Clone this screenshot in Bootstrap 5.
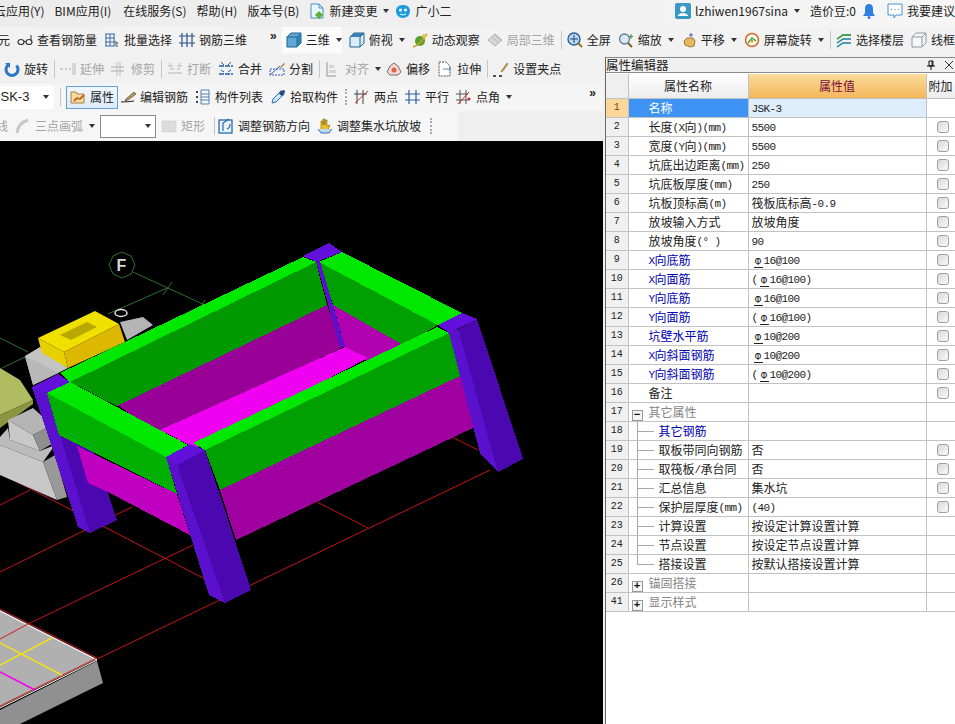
<!DOCTYPE html>
<html lang="en">
<head>
  <meta charset="UTF-8">
  <meta name="viewport" content="width=device-width, initial-scale=1.0">
  <title>钢筋三维 属性编辑器</title>
  <link href="https://cdn.jsdelivr.net/npm/bootstrap@5.3.0/dist/css/bootstrap.min.css" rel="stylesheet">
  <style>
    html, body { height: 100%; overflow: hidden; }
    body { background: #f0f0f0; color: #222; font: 12px/16px "Noto Sans CJK SC", "Liberation Sans", sans-serif; }
    .app-shell { width: 955px; height: 724px; }
    .tb-row { white-space: nowrap; overflow: hidden; flex: none; }
    .row-menu { height: 27px; padding-bottom: 5px; background: linear-gradient(90deg, #ececec 0, #f0f0f0 50%, #f6f6f6 100%); gap: 10px; }
    .row-main { height: 28px; padding-bottom: 2px; background: #f2f2f2; gap: 7px; }
    .row-edit { height: 28px; background: #f1f1f1; gap: 7px; width: 603px; }
    .row-prop { height: 28px; background: #f5f5f5; gap: 7px; width: 603px; }
    .row-draw { height: 30px; background: linear-gradient(90deg, #f6f6f6 0, #f6f6f6 458px, #efefef 458px); gap: 5px; width: 603px; }
    .tb-item { display: inline-flex; align-items: center; flex: none; }
    .tb-ico { width: 16px; height: 16px; margin-right: 4px; flex: none; }
    .tb-off { color: #a4a4a4; }
    .tb-sep { width: 1px; height: 18px; background: #c6c6c6; flex: none; margin: 0 -2px 0 -1px; }
    .tb-caret { width: 0; height: 0; margin-left: 6px; border: 3px solid transparent; border-top: 4px solid #333; border-bottom: 0; flex: none; }
    .tb-more { font: 12px/12px "Liberation Sans", sans-serif; font-weight: 700; letter-spacing: -1px; flex: none; }
    .tb-grip { width: 2px; height: 16px; border-left: 2px dotted #aaa; flex: none; }
    .clip-menu { margin-left: -6px; }
    .bim-menu { margin-right: 2px; }
    .change-menu { margin-right: -4px; }
    .bean-menu { margin-right: -5px; }
    .bell-ico { margin-right: 0; }
    .clip-main { margin-left: -2px; }
    .clip-draw { margin-left: -4px; margin-right: 2px; }
    .align-item { margin-right: -2px; }
    .pit-item { margin-left: 2px; }
    .view-group { background: #fbfbfb; height: 26px; margin-left: -1px; padding-left: 4px; }
    .combo-clip { width: 60px; height: 23px; background: #fff; padding-right: 5px; margin-left: -6px; justify-content: space-between; flex: none; font-family: "Liberation Sans", sans-serif; font-size: 13px; }
    .combo-box { width: 56px; height: 23px; background: #fff; border: 1px solid #8a8a8a; padding-right: 4px; justify-content: flex-end; flex: none; }
    .btn-active { height: 23px; padding: 0 3px; margin-right: -5px; border: 1px solid #62a0d8; background: linear-gradient(#f3f8fd, #dcebf9); flex: none; }
    .scene-3d { width: 603px; height: 583px; background: #000; display: block; }
    .pit-solid { shape-rendering: crispEdges; }
    .side-gap { width: 2px; background: #f0f0f0; flex: none; }
    .prop-panel { width: 350px; margin-top: 2px; background: #fff; border-left: 1px solid #666; flex: none; }
    .prop-title { height: 16px; background: #f0f0f0; border-top: 1px solid #8a8a8a; border-bottom: 1px solid #8a8a8a; font-size: 12.500px; line-height: 14px; margin-bottom: 1px; padding-right: 1px; }
    .prop-title svg { width: 10px; height: 10px; }
    .prop-grid { width: 349px; table-layout: fixed; border-collapse: collapse; margin: 0; font-size: 12px; }
    .prop-grid th, .prop-grid td { height: 19px; padding: 0; border: solid #c2c2c2; border-width: 0 1px 1px 0; line-height: 17px; overflow: hidden; white-space: nowrap; color: #222; background: #fff; font-weight: 400; box-shadow: none; vertical-align: middle; }
    .prop-grid thead th { height: 24px; font-size: 12px; text-align: center; background: linear-gradient(#fff, #ececec); border-bottom-color: #c2c2c2; }
    .prop-grid thead th.head-val { background: linear-gradient(#fbdc9a, #f3b65a); color: #7a0b3c; }
    .prop-grid thead th.head-num { background: #efefef; }
    .prop-grid .cell-num { background: #f0f0f0; text-align: center; font: 10px/17px "Liberation Mono", monospace; }
    .prop-grid .cell-name { padding-left: 20px; }
    .prop-grid .cell-val { padding-left: 3px; }
    .prop-grid .cell-chk { text-align: center; padding-left: 5px; line-height: 0; }
    .prop-grid .name-blue { color: #0000b4; }
    .prop-grid .name-grey { color: #858585; }
    .prop-grid tr.row-sel .cell-num { background: #fbd79c; color: #7a3a10; }
    .prop-grid tr.row-sel .cell-name { background: #3f93f4; color: #fff; }
    .prop-grid tr.row-sel .cell-val { background: #deedfb; }
    .prop-grid .tree-mid { padding-left: 30px; background: linear-gradient(#a8a8a8, #a8a8a8) 8px 0/1px 100% no-repeat, linear-gradient(#a8a8a8, #a8a8a8) 8px 9px/17px 1px no-repeat, #fff; }
    .prop-grid .tree-end { padding-left: 30px; background: linear-gradient(#a8a8a8, #a8a8a8) 8px 0/1px 10px no-repeat, linear-gradient(#a8a8a8, #a8a8a8) 8px 9px/17px 1px no-repeat, #fff; }
    .prop-grid .tree-head { padding-left: 3px; }
    .tree-box { display: inline-block; width: 11px; height: 11px; margin-right: 6px; border: 1px solid #999; background: #f4f4f4; font: 700 11px/8px "Liberation Mono", monospace; color: #111; text-align: center; vertical-align: -1px; }
    .lat { font: 11px/12px "Liberation Mono", monospace; letter-spacing: -.6px; vertical-align: 1px; }
    .rebar { display: inline-block; width: 9px; margin: 0 1px 0 2px; font: 10px/9px "Liberation Mono", monospace; border-bottom: 1px solid #222; text-align: center; }
    .prop-check { width: 12px; height: 12px; margin: 0; border: 1px solid #a0a0a0; border-radius: 0; background: linear-gradient(135deg, #d8d8d8, #fafafa); vertical-align: middle; }
    .f-label { font: 700 16px "Liberation Sans", sans-serif; fill: #d8d8d8; }
  </style>
</head>
<body>
  <svg width="0" height="0" class="d-none">
    <symbol id="i-doc" viewBox="0 0 16 16"><path d="M2 1h8l4 4v10H2z" fill="#eaf4fb" stroke="#4a8fc0"/><path d="M10 1v4h4" fill="none" stroke="#4a8fc0"/><path d="M10 8l4 4-4 4-4-4z" fill="#5cb030"/></symbol>
    <symbol id="i-bot" viewBox="0 0 16 16"><path d="M8 2c4 0 7 2 7 6s-3 7-7 7-7-3-7-7 3-6 7-6z" fill="#1d9be0"/><circle cx="5.5" cy="7" r="1.6" fill="#fff"/><circle cx="10.5" cy="7" r="1.6" fill="#fff"/><path d="M5 11q3 2 6 0" stroke="#fff" fill="none"/></symbol>
    <symbol id="i-user" viewBox="0 0 16 16"><rect width="16" height="16" rx="2" fill="#3a98c4"/><circle cx="8" cy="6" r="3" fill="#fff"/><path d="M3 13h10v-1q-2-2-5-2t-5 2z" fill="#fff"/></symbol>
    <symbol id="i-bell" viewBox="0 0 16 16"><path d="M8 1q4 0 4 5v4l2 3H2l2-3V6q0-5 4-5z" fill="#2f7fe0"/><circle cx="8" cy="14.5" r="1.5" fill="#2f7fe0"/></symbol>
    <symbol id="i-chat" viewBox="0 0 16 16"><path d="M1 1h14v11H9l-2 3v-3H1z" fill="#fff" stroke="#4a90d0"/><path d="M4 6.5h1m2.500 0h1m2.500 0h1" stroke="#4a90d0"/></symbol>
    <symbol id="i-glass" viewBox="0 0 16 16"><ellipse cx="4" cy="10" rx="3" ry="2.500" fill="none" stroke="#333" stroke-width="1.200"/><ellipse cx="12" cy="10" rx="3" ry="2.500" fill="none" stroke="#333" stroke-width="1.200"/><path d="M7 9.500h2M14 9V3" stroke="#333"/></symbol>
    <symbol id="i-batch" viewBox="0 0 16 16"><path d="M1 2h10M1 6h10M1 10h10M1 14h10M2 2v12M6 2v12M10 2v12" stroke="#3a6ea8" fill="none"/><path d="M10 8l5 3-2 1 1 3-2 0-1-3z" fill="#888"/></symbol>
    <symbol id="i-rebar" viewBox="0 0 16 16"><path d="M0 4h16M0 11h16M3 1v14M8 1v14M13 1v14" stroke="#27508c" stroke-width="1.200" fill="none"/></symbol>
    <symbol id="i-cube" viewBox="0 0 16 16"><path d="M1 5l4-4h10v10l-4 4H1z" fill="#5ea8d8" stroke="#20608c"/><path d="M1 5h10v10M11 5l4-4" fill="none" stroke="#20608c"/><path d="M11 5l4-4v10l-4 4z" fill="#2f7fb4"/></symbol>
    <symbol id="i-top" viewBox="0 0 16 16"><path d="M1 5l4-4h10v10l-4 4H1z" fill="#d9ecf7" stroke="#20608c"/><path d="M1 5l4-4h10l-4 4z" fill="#3c82b8"/><path d="M11 5v10M11 5l4-4" stroke="#20608c" fill="none"/></symbol>
    <symbol id="i-orbit" viewBox="0 0 16 16"><circle cx="8" cy="9" r="5" fill="#58a030"/><path d="M1 15Q8 13 15 2" stroke="#c8a020" stroke-width="1.500" fill="none"/><circle cx="12" cy="4" r="2" fill="#e8c840"/></symbol>
    <symbol id="i-part" viewBox="0 0 16 16"><path d="M1 8l7-6 7 6-7 6z" fill="#d8d8d8" stroke="#b0b0b0"/><path d="M5 5l7 6M8 3l6 6" stroke="#b4b4b4"/></symbol>
    <symbol id="i-full" viewBox="0 0 16 16"><circle cx="7" cy="7" r="6" fill="#bcd6ee" stroke="#2c5f95" stroke-width="1.400"/><path d="M7 3v8M3 7h8" stroke="#1d4a80"/><path d="M11 11l4 4" stroke="#a07020" stroke-width="2"/></symbol>
    <symbol id="i-zoom" viewBox="0 0 16 16"><circle cx="6.500" cy="7" r="5" fill="#dbe8f4" stroke="#5f7f9f" stroke-width="1.300"/><path d="M10 11l4 4" stroke="#806020" stroke-width="2"/><path d="M13 2v5M11 4.500h4" stroke="#3a9040"/></symbol>
    <symbol id="i-hand" viewBox="0 0 16 16"><path d="M3 9l3-3h6l2 3-1 5-4 1-5-2z" fill="#e8b860" stroke="#a07830"/><path d="M10 1v4M8 3h4" stroke="#3a6ea8"/></symbol>
    <symbol id="i-rot" viewBox="0 0 16 16"><circle cx="8" cy="8" r="6.500" fill="#f4f8e8" stroke="#d86830" stroke-width="1.500"/><path d="M4 11l4-5 4 3" stroke="#40a060" stroke-width="1.500" fill="none"/><circle cx="8" cy="9" r="1.500" fill="#e8a020"/></symbol>
    <symbol id="i-floor" viewBox="0 0 16 16"><path d="M1 7l6-4h8M1 11l6-4h8M1 15l6-4h8" stroke="#1a7f9c" stroke-width="1.500" fill="none"/><path d="M1 7l6-4h8" stroke="#48a030" stroke-width="1.500" fill="none"/></symbol>
    <symbol id="i-wire" viewBox="0 0 16 16"><path d="M1 5l4-4h10v10l-4 4H1z" fill="#f6f6f6" stroke="#8a9aa6"/><path d="M1 5h10v10M11 5l4-4" fill="none" stroke="#8a9aa6"/></symbol>
    <symbol id="i-turn" viewBox="0 0 16 16"><path d="M12.500 4.500A6 6 0 1 1 4 4" fill="none" stroke="#2e74c8" stroke-width="3"/><path d="M1 2h5v5z" fill="#2e74c8"/></symbol>
    <symbol id="i-ext" viewBox="0 0 16 16"><path d="M0 8h3M5 8h2M9 8h2" stroke="#aaa"/><path d="M13 2v12M15 2v12" stroke="#bbb"/></symbol>
    <symbol id="i-trim" viewBox="0 0 16 16"><path d="M0 6h13M0 10h13" stroke="#aaa"/><path d="M6 1v14M9 1v14" stroke="#bbb"/></symbol>
    <symbol id="i-brk" viewBox="0 0 16 16"><path d="M1 5h5M10 5h5M1 12h14M3 8h4M10 8h3" stroke="#b4b4b4" stroke-width="1.200"/><path d="M3 2v2M13 2v2" stroke="#b4b4b4"/></symbol>
    <symbol id="i-merge" viewBox="0 0 16 16"><path d="M1 5h14M1 13h14" stroke="#1f5aa8" stroke-width="1.400" stroke-dasharray="5 1"/><path d="M3 1l3 3M13 1l-3 3M3 9l3 2M13 9l-3 2" stroke="#1f5aa8"/></symbol>
    <symbol id="i-split" viewBox="0 0 16 16"><path d="M1 14V8h14v6z" fill="none" stroke="#2a5fc0" stroke-dasharray="2 1"/><path d="M1 14L11 5" stroke="#2a5fc0"/><path d="M11 6l4-4 1 1-4 4z" fill="#b08030"/></symbol>
    <symbol id="i-align" viewBox="0 0 16 16"><path d="M2 1v14h9" fill="none" stroke="#b4b4b4" stroke-width="1.500"/><path d="M4 4h5v3H4zM4 9h7v3H4z" fill="#d4d4d4"/></symbol>
    <symbol id="i-off" viewBox="0 0 16 16"><path d="M8 2l4 3 3 6-3 3H4l-3-3 3-6z" fill="#f2d8d0" stroke="#707070"/><circle cx="8" cy="9" r="2.500" fill="#e06050"/></symbol>
    <symbol id="i-str" viewBox="0 0 16 16"><path d="M2 1h7l4 4v10H2z" fill="#fff" stroke="#555" stroke-dasharray="2 1"/><path d="M6 8h8M12 6l2 2-2 2" stroke="#5a8ab0" fill="none"/></symbol>
    <symbol id="i-grip" viewBox="0 0 16 16"><path d="M9 9l5-7 1 1-5 7-2 1z" fill="#c89a50" stroke="#806020" stroke-width=".5"/><path d="M0 15h3M6 15h3" stroke="#222" stroke-width="1.500"/></symbol>
    <symbol id="i-prop" viewBox="0 0 16 16"><path d="M1 3h5l1 2h7v9H1z" fill="#f6dca0" stroke="#a88040"/><path d="M4 12l3-3 3 1 4-4" stroke="#c06020" stroke-width="1.800" fill="none"/></symbol>
    <symbol id="i-edit" viewBox="0 0 16 16"><path d="M1 13q7 0 13-1" stroke="#222" fill="none"/><path d="M6 10l8-7 2 2-8 6-3 1z" fill="#c09a50" stroke="#333" stroke-width=".6"/></symbol>
    <symbol id="i-list" viewBox="0 0 16 16"><path d="M1 3h2M1 8h2M1 13h2" stroke="#444" stroke-width="2" stroke-dasharray="2 0"/><path d="M6 1h8v14H6zM6 5h8M6 8h8M6 11h8" fill="#f4f8fc" stroke="#5080a8"/></symbol>
    <symbol id="i-pick" viewBox="0 0 16 16"><path d="M2 14l1-4 6-6 3 3-6 6z" fill="#cfe6f8" stroke="#2f6eb0"/><path d="M10 2l4-1 1 1-1 4-2 1-3-3z" fill="#234e8a"/></symbol>
    <symbol id="i-two" viewBox="0 0 16 16"><path d="M3 1v14M9 1v14M0 5h13" stroke="#444" fill="none"/><path d="M1 14L14 2" stroke="#c03030"/></symbol>
    <symbol id="i-par" viewBox="0 0 16 16"><path d="M0 5h15M0 11h15M4 1v14M11 1v14" stroke="#2f5f9c" stroke-width="1.200" fill="none"/></symbol>
    <symbol id="i-ang" viewBox="0 0 16 16"><path d="M0 5h12M0 11h12M4 1v14M10 1v14" stroke="#555" fill="none"/><path d="M2 15L13 3" stroke="#c02020"/><circle cx="13" cy="10" r="1.500" fill="#d02020"/></symbol>
    <symbol id="i-arc" viewBox="0 0 16 16"><path d="M2 15Q3 5 13 2" fill="none" stroke="#c8c8c8" stroke-width="3"/></symbol>
    <symbol id="i-rect" viewBox="0 0 16 16"><rect x="1" y="3" width="14" height="11" fill="#dcdcdc" stroke="#c6c6c6" stroke-dasharray="1 1"/></symbol>
    <symbol id="i-dir" viewBox="0 0 16 16"><rect x="1" y="2" width="13" height="13" fill="#e8f2fb" stroke="#2c6aa8" stroke-width="1.300"/><path d="M5 13V5l6-4M9 11q3-1 3-5" fill="none" stroke="#2c6aa8" stroke-width="1.200"/></symbol>
    <symbol id="i-pit" viewBox="0 0 16 16"><path d="M4 9V3h2v4V1h2v6V2h2v6l3-1-2 5H4z" fill="#f0c020" stroke="#806010" stroke-width=".6"/><path d="M1 11l3 4h8l3-4" fill="#bcd8f0" stroke="#3a6ea8"/></symbol>
    <symbol id="i-pin" viewBox="0 0 10 10"><path d="M3 1h4v5H3zM1 6h8M5 6v4M6 1v5" fill="none" stroke="#111"/></symbol>
  </svg>

  <div class="app-shell d-flex flex-column">
    <div class="tb-row row-menu d-flex align-items-center">
      <span class="tb-item clip-menu">云应用(Y)</span>
      <span class="tb-item bim-menu">BIM应用(I)</span>
      <span class="tb-item">在线服务(S)</span>
      <span class="tb-item">帮助(H)</span>
      <span class="tb-item">版本号(B)</span>
      <span class="tb-item change-menu"><svg class="tb-ico"><use href="#i-doc"/></svg>新建变更<i class="tb-caret"></i></span>
      <span class="tb-item"><svg class="tb-ico"><use href="#i-bot"/></svg>广小二</span>
      <span class="tb-item ms-auto"><svg class="tb-ico"><use href="#i-user"/></svg>lzhiwen1967sina<i class="tb-caret"></i></span>
      <span class="tb-item bean-menu">造价豆:0</span>
      <span class="tb-item"><svg class="tb-ico bell-ico"><use href="#i-bell"/></svg></span>
      <span class="tb-item"><svg class="tb-ico"><use href="#i-chat"/></svg>我要建议</span>
    </div>

    <div class="tb-row row-main d-flex align-items-center">
      <span class="tb-item clip-main">元</span>
      <span class="tb-item"><svg class="tb-ico"><use href="#i-glass"/></svg>查看钢筋量</span>
      <span class="tb-item"><svg class="tb-ico"><use href="#i-batch"/></svg>批量选择</span>
      <span class="tb-item"><svg class="tb-ico"><use href="#i-rebar"/></svg>钢筋三维</span>
      <span class="tb-more ms-3 pb-2">»</span>
      <span class="tb-item view-group"><svg class="tb-ico"><use href="#i-cube"/></svg>三维<i class="tb-caret"></i></span>
      <span class="tb-item"><svg class="tb-ico"><use href="#i-top"/></svg>俯视<i class="tb-caret"></i></span>
      <span class="tb-item"><svg class="tb-ico"><use href="#i-orbit"/></svg>动态观察</span>
      <span class="tb-item tb-off"><svg class="tb-ico"><use href="#i-part"/></svg>局部三维</span>
      <i class="tb-sep"></i>
      <span class="tb-item"><svg class="tb-ico"><use href="#i-full"/></svg>全屏</span>
      <span class="tb-item"><svg class="tb-ico"><use href="#i-zoom"/></svg>缩放<i class="tb-caret"></i></span>
      <span class="tb-item"><svg class="tb-ico"><use href="#i-hand"/></svg>平移<i class="tb-caret"></i></span>
      <span class="tb-item"><svg class="tb-ico"><use href="#i-rot"/></svg>屏幕旋转<i class="tb-caret"></i></span>
      <i class="tb-sep"></i>
      <span class="tb-item"><svg class="tb-ico"><use href="#i-floor"/></svg>选择楼层</span>
      <span class="tb-item"><svg class="tb-ico"><use href="#i-wire"/></svg>线框</span>
    </div>

    <div class="d-flex flex-grow-1">
      <div class="d-flex flex-column">
        <div class="tb-row row-edit d-flex align-items-center ps-1">
          <span class="tb-item"><svg class="tb-ico"><use href="#i-turn"/></svg>旋转</span>
          <i class="tb-sep"></i>
          <span class="tb-item tb-off"><svg class="tb-ico"><use href="#i-ext"/></svg>延伸</span>
          <span class="tb-item tb-off"><svg class="tb-ico"><use href="#i-trim"/></svg>修剪</span>
          <i class="tb-sep"></i>
          <span class="tb-item tb-off"><svg class="tb-ico"><use href="#i-brk"/></svg>打断</span>
          <span class="tb-item"><svg class="tb-ico"><use href="#i-merge"/></svg>合并</span>
          <span class="tb-item"><svg class="tb-ico"><use href="#i-split"/></svg>分割</span>
          <i class="tb-sep"></i>
          <span class="tb-item tb-off align-item"><svg class="tb-ico"><use href="#i-align"/></svg>对齐<i class="tb-caret"></i></span>
          <span class="tb-item"><svg class="tb-ico"><use href="#i-off"/></svg>偏移</span>
          <span class="tb-item"><svg class="tb-ico"><use href="#i-str"/></svg>拉伸</span>
          <i class="tb-sep"></i>
          <span class="tb-item"><svg class="tb-ico"><use href="#i-grip"/></svg>设置夹点</span>
        </div>

        <div class="tb-row row-prop d-flex align-items-center">
          <span class="combo-clip d-flex align-items-center">JSK-3<i class="tb-caret"></i></span>
          <i class="tb-sep"></i>
          <span class="tb-item btn-active"><svg class="tb-ico"><use href="#i-prop"/></svg>属性</span>
          <span class="tb-item"><svg class="tb-ico"><use href="#i-edit"/></svg>编辑钢筋</span>
          <span class="tb-item"><svg class="tb-ico"><use href="#i-list"/></svg>构件列表</span>
          <span class="tb-item"><svg class="tb-ico"><use href="#i-pick"/></svg>拾取构件</span>
          <i class="tb-grip"></i>
          <span class="tb-item"><svg class="tb-ico"><use href="#i-two"/></svg>两点</span>
          <span class="tb-item"><svg class="tb-ico"><use href="#i-par"/></svg>平行</span>
          <span class="tb-item"><svg class="tb-ico"><use href="#i-ang"/></svg>点角<i class="tb-caret"></i></span>
          <span class="tb-more ms-auto me-2 pb-2">»</span>
        </div>

        <div class="tb-row row-draw d-flex align-items-center">
          <span class="tb-item tb-off clip-draw">线</span>
          <span class="tb-item tb-off"><svg class="tb-ico"><use href="#i-arc"/></svg>三点画弧<i class="tb-caret"></i></span>
          <span class="combo-box d-flex align-items-center"><i class="tb-caret"></i></span>
          <span class="tb-item tb-off"><svg class="tb-ico"><use href="#i-rect"/></svg>矩形</span>
          <i class="tb-sep ms-1"></i>
          <span class="tb-item"><svg class="tb-ico"><use href="#i-dir"/></svg>调整钢筋方向</span>
          <span class="tb-item pit-item"><svg class="tb-ico"><use href="#i-pit"/></svg>调整集水坑放坡</span>
          <i class="tb-grip ms-1"></i>
        </div>

        <svg class="scene-3d" viewBox="0 141 603 583">
          <!-- axis lines -->
          <g stroke="#2f6f2f" fill="none">
            <path d="M122 252l9 4 4 9-4 9-9 4-9-4-4-9 4-9z"/>
            <path d="M133 272L207 306M108 314L167 288M163 295l9-13M200 308l5-8M0 338L28 352M2 368L27 356"/>
          </g>
          <text class="f-label" x="116.500" y="271">F</text>
          <ellipse cx="121" cy="313" rx="6" ry="3.500" fill="none" stroke="#e0e0e0" stroke-width="1.500"/>

          <!-- red grid -->
          <g stroke="#c81414" fill="none">
            <path d="M0 473L207 580M317 502L368 528M452 437L478 450"/>
            <path d="M0 505L30 490M0 572L132 507M28 624L193 545M97 659L490 470"/>
          </g>

          <!-- neighbouring foundations -->
          <path d="M0 368L20 380L33 400L0 415z" fill="#b0bc60"/>
          <path d="M33 400L0 415V428L33 404z" fill="#8c9640"/>
          <path d="M120 322L143 317L153 325L127 340z" fill="#b4b4b4"/>
          <path d="M25 356L40 347L68 368L58 373L33 385z" fill="#c4c4c4"/>
          <path d="M33 385L25 356L58 373z" fill="#b8b8b8"/>
          <path d="M0 437L8 428L10 440L40 451L55 445L43 462L0 445z" fill="#bcbcbc"/>
          <path d="M8 420L33 408L52 425L33 435z" fill="#b4b4b4"/>
          <path d="M8 420L33 435L40 451L10 440z" fill="#c8c8c8"/>
          <path d="M33 435L52 425L55 442L40 451z" fill="#8f8f8f"/>
          <path d="M0 445L43 462L57 500L0 475z" fill="#c8c8c8"/>
          <path d="M43 462L55 455L67 497L57 500z" fill="#999"/>
          <path d="M38 338L95 311L119 324L64 352z" fill="#f0e000"/>
          <path d="M60 335L87 322L97 327L71 340z" fill="#b8a800"/>
          <path d="M38 338L64 352L68 368L42 353z" fill="#e8d000"/>
          <path d="M64 352L119 324L125 342L68 368z" fill="#dcb800"/>

          <!-- sump pit -->
          <g class="pit-solid">
            <path d="M32 387L47 393L90 533L78 527z" fill="#5a10cc"/>
            <path d="M47 393L70 382L117 520L90 533z" fill="#4c08b0"/>
            <path d="M32 387L58 374L70 382L47 393z" fill="#6410dc"/>
            <path d="M77 446L177 494L190 535L110 493L88 483z" fill="#c000c0"/>
            <path d="M108 398L327 305L343 347L160 436z" fill="#980098"/>
            <path d="M333 305L403 345L368 362L345 347z" fill="#b000b0"/>
            <path d="M160 430L345 347L368 358L195 448z" fill="#f000f0"/>
            <path d="M70 382L316 262L327 305L117 406z" fill="#009a00"/>
            <path d="M60 373L303 257L316 262L70 382z" fill="#00e800"/>
            <path d="M319 262L438 325L403 345L333 305z" fill="#00a000"/>
            <path d="M342 252L462 313L438 325L319 262z" fill="#00e800"/>
            <path d="M316 262L320 261L345 347L340 347z" fill="#5a10cc"/>
            <path d="M303 256L329 243L342 252L316 262z" fill="#6410dc"/>
            <path d="M220 490L462 375L475 427L236 540z" fill="#a000a0"/>
            <path d="M205 450L449 333L462 375L220 490z" fill="#00a000"/>
            <path d="M193 443L437 327L449 333L205 450z" fill="#00e800"/>
            <path d="M47 393L70 382L188 445L166 457z" fill="#00e800"/>
            <path d="M47 393L166 457L177 494L59 435z" fill="#00b000"/>
            <path d="M449 333L458 329L498 472L480 453z" fill="#5a10cc"/>
            <path d="M458 329L477 319L523 459L498 472z" fill="#4c08b0"/>
            <path d="M438 325L462 313L477 319L449 333z" fill="#6410dc"/>
            <path d="M166 457L177 465L225 603L209 595z" fill="#5a10cc"/>
            <path d="M177 465L205 450L251 590L225 603z" fill="#4c08b0"/>
            <path d="M166 457L190 444L205 450L177 465z" fill="#6410dc"/>
          </g>

          <!-- slab bottom left -->
          <path d="M0 610L97 659L0 707z" fill="#b0b0b0"/>
          <path d="M0 710L97 661L103 683L20 724H0z" fill="#909090"/>
          <path d="M0 611L97 660L0 708" fill="none" stroke="#fff"/>
          <path d="M0 609L97 658L0 706M28 624L0 639" fill="none" stroke="#d01818"/>
          <path d="M0 643L62 675M52 638L0 665" stroke="#f0e020" stroke-width="1.500"/>
          <path d="M0 672L35 690" stroke="#f000f0" stroke-width="1.500"/>
        </svg>
      </div>

      <div class="side-gap"></div>

      <div class="prop-panel">
        <div class="prop-title d-flex align-items-center justify-content-between">
          <span>属性编辑器</span>
          <span class="d-flex align-items-center gap-2"><svg><use href="#i-pin"/></svg><svg viewBox="0 0 10 10"><path d="M1 1l8 8M9 1l-8 8" stroke="#333" fill="none"/></svg></span>
        </div>
        <table class="table prop-grid">
          <colgroup><col width="22"><col width="120"><col width="178"><col width="29"></colgroup>
          <thead>
            <tr><th class="head-num"></th><th>属性名称</th><th class="head-val">属性值</th><th>附加</th></tr>
          </thead>
          <tbody id="propRows"></tbody>
        </table>
      </div>
    </div>
  </div>

  <script>
    // num, name, value, style of the name cell, has checkbox
    const rows = [
      [1, '名称', 'JSK-3', '', 0],
      [2, '长度(X向)(mm)', '5500', '', 1],
      [3, '宽度(Y向)(mm)', '5500', '', 1],
      [4, '坑底出边距离(mm)', '250', '', 1],
      [5, '坑底板厚度(mm)', '250', '', 1],
      [6, '坑板顶标高(m)', '筏板底标高-0.9', '', 1],
      [7, '放坡输入方式', '放坡角度', '', 1],
      [8, '放坡角度(° )', '90', '', 1],
      [9, 'X向底筋', 'Φ16@100', 'name-blue', 1],
      [10, 'X向面筋', '(Φ16@100)', 'name-blue', 1],
      [11, 'Y向底筋', 'Φ16@100', 'name-blue', 1],
      [12, 'Y向面筋', '(Φ16@100)', 'name-blue', 1],
      [13, '坑壁水平筋', 'Φ10@200', 'name-blue', 1],
      [14, 'X向斜面钢筋', 'Φ10@200', 'name-blue', 1],
      [15, 'Y向斜面钢筋', '(Φ10@200)', 'name-blue', 1],
      [16, '备注', '', '', 1],
      [17, '其它属性', '', 'tree-head name-grey', 0, '−'],
      [18, '其它钢筋', '', 'tree-mid name-blue', 0],
      [19, '取板带同向钢筋', '否', 'tree-mid', 1],
      [20, '取筏板/承台同', '否', 'tree-mid', 1],
      [21, '汇总信息', '集水坑', 'tree-mid', 1],
      [22, '保护层厚度(mm)', '(40)', 'tree-mid', 1],
      [23, '计算设置', '按设定计算设置计算', 'tree-mid', 0],
      [24, '节点设置', '按设定节点设置计算', 'tree-mid', 0],
      [25, '搭接设置', '按默认搭接设置计算', 'tree-end', 0],
      [26, '锚固搭接', '', 'tree-head name-grey', 0, '+'],
      [41, '显示样式', '', 'tree-head name-grey', 0, '+']
    ];

    function fmt(text) {
      return text
        .replace(/[\x20-\x7e°]+/g, m => `<span class="lat">${m}</span>`)
        .replace(/Φ/g, '<span class="rebar">Φ</span>');
    }

    document.getElementById('propRows').innerHTML = rows.map(r => `
      <tr class="${r[0] === 1 ? 'row-sel' : ''}">
        <td class="cell-num">${r[0]}</td>
        <td class="cell-name ${r[3]}">${r[5] ? `<span class="tree-box">${r[5]}</span>` : ''}${fmt(r[1])}</td>
        <td class="cell-val">${fmt(r[2])}</td>
        <td class="cell-chk">${r[4] ? '<input class="form-check-input prop-check" type="checkbox">' : ''}</td>
      </tr>`).join('');
  </script>
  <script src="https://cdn.jsdelivr.net/npm/bootstrap@5.3.0/dist/js/bootstrap.bundle.min.js"></script>
</body>
</html>
